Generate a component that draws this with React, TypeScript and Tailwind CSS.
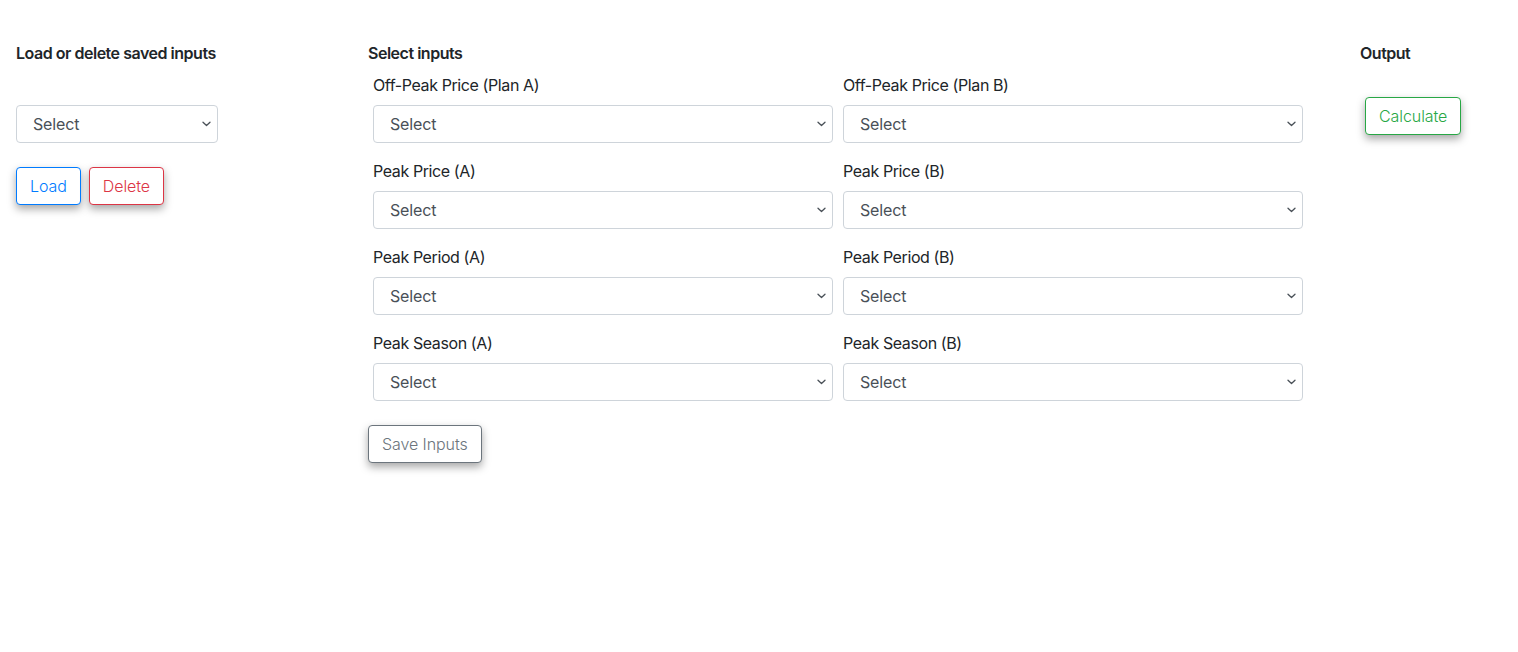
import React from 'react'

const fields: [string, string][] = [
  ['Off-Peak Price (Plan A)', 'Off-Peak Price (Plan B)'],
  ['Peak Price (A)', 'Peak Price (B)'],
  ['Peak Period (A)', 'Peak Period (B)'],
  ['Peak Season (A)', 'Peak Season (B)'],
]

function SelectBox({ className = '' }: { className?: string }) {
  return (
    <div className={`relative h-[38px] ${className}`}>
      <select
        defaultValue=""
        className="h-full w-full appearance-none rounded-[4px] border border-[#ced4da] bg-white pl-[16px] pr-8 text-[16px] tracking-[-0.01em] text-[#495057] outline-none"
      >
        <option value="">Select</option>
      </select>
      <svg
        className="pointer-events-none absolute right-[7px] top-1/2 -translate-y-1/2"
        width="9"
        height="6"
        viewBox="0 0 9 6"
        fill="none"
      >
        <path d="M1 1.2l3.5 3.3L8 1.2" stroke="#495057" strokeWidth="1.3" strokeLinecap="round" strokeLinejoin="round" />
      </svg>
    </div>
  )
}

function OutlineButton({ label, tone }: { label: string; tone: string }) {
  return (
    <button
      className={`h-[38px] rounded-[4px] border bg-white px-[13px] text-[16px] font-light tracking-[-0.005em] shadow-[0_4px_8px_rgba(0,0,0,0.35)] ${tone}`}
    >
      {label}
    </button>
  )
}

export default function App() {
  return (
    <div
      className="flex min-h-[652px] bg-white pt-[41px] text-[#212529]"
      style={{ fontFamily: 'Inter, "Noto Sans", sans-serif' }}
    >
      <div className="w-[352px] pl-[16px]">
        <h2 className="text-[16px] leading-[24px] font-semibold tracking-[-0.03em]">Load or delete saved inputs</h2>
        <SelectBox className="mt-[40px] w-[202px]" />
        <div className="mt-[24px] flex gap-[8px]">
          <OutlineButton label="Load" tone="border-[#007bff] text-[#007bff]" />
          <OutlineButton label="Delete" tone="border-[#dc3545] text-[#dc3545]" />
        </div>
      </div>

      <div className="w-[992px] pl-[16px]">
        <h2 className="text-[16px] leading-[24px] font-semibold tracking-[-0.03em]">Select inputs</h2>
        <div className="mt-[8px] grid w-[940px] grid-cols-2 gap-x-[10px] gap-y-[16px] px-[5px]">
          {fields.map(([a, b]) => (
            <React.Fragment key={a}>
              <div>
                <div className="text-[16px] leading-[24px] tracking-[-0.025em]">{a}</div>
                <SelectBox className="mt-[8px]" />
              </div>
              <div>
                <div className="text-[16px] leading-[24px] tracking-[-0.025em]">{b}</div>
                <SelectBox className="mt-[8px]" />
              </div>
            </React.Fragment>
          ))}
        </div>
        <div className="mt-[24px]">
          <OutlineButton label="Save Inputs" tone="border-[#6c757d] text-[#6c757d]" />
        </div>
      </div>

      <div className="pl-[16px]">
        <h2 className="text-[16px] leading-[24px] font-semibold tracking-[-0.03em]">Output</h2>
        <div className="mt-[32px] pl-[5px]">
          <OutlineButton label="Calculate" tone="border-[#28a745] text-[#28a745]" />
        </div>
      </div>
    </div>
  )
}
